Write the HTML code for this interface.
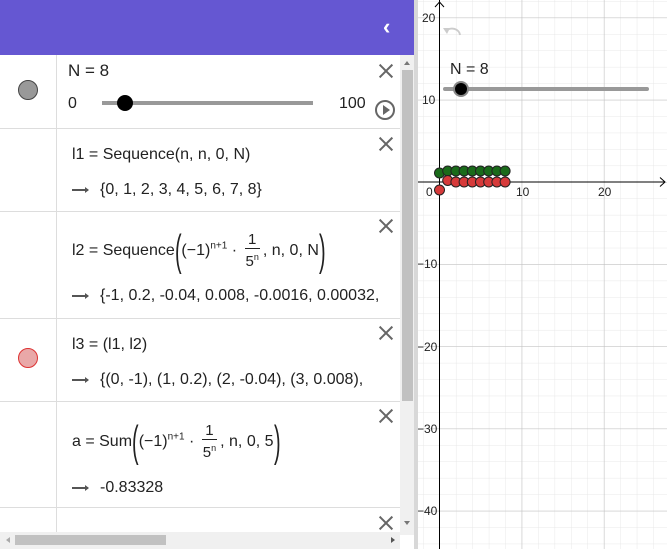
<!DOCTYPE html>
<html><head><style>
body{margin:0;width:667px;height:549px;overflow:hidden;position:relative;background:#fff;font-family:"Liberation Sans",sans-serif;color:#222}
.abs{position:absolute;white-space:nowrap}
.hdr{left:0;top:0;width:414px;height:55px;background:#6557d2}
.t{font-size:16px}
.sep{position:absolute;left:0;width:400px;height:1px;background:#ddd}
.x{position:absolute;width:14px;height:14px}
.x:before,.x:after{content:"";position:absolute;left:-2px;top:6px;width:18px;height:2px;background:#666;transform:rotate(45deg)}
.x:after{transform:rotate(-45deg)}
.arr{display:inline-block;width:16px;height:2px;background:#555;vertical-align:middle;margin-right:12px;position:relative}
.arr:after{content:"";position:absolute;right:-1px;top:-2px;border-left:4px solid #555;border-top:3px solid transparent;border-bottom:3px solid transparent}
.big{font-size:44px;font-weight:100;vertical-align:-10px;transform:scaleX(.45);display:inline-block;margin:0 -4px}
.fr{display:inline-block;vertical-align:middle;text-align:center;font-size:15px;line-height:16px;margin:0 3px}
.fr span{display:block;padding:0 1px}
sup{font-size:10px}
</style></head><body>
<div class="abs hdr"></div>
<div class="abs" style="left:383px;top:14px;color:#fff;font-size:22px;font-weight:bold">‹</div>
<div class="abs" style="left:56px;top:55px;width:1px;height:480px;background:#ddd"></div>
<div class="sep" style="top:128px"></div>
<div class="sep" style="top:211px"></div>
<div class="sep" style="top:318px"></div>
<div class="sep" style="top:401px"></div>
<div class="sep" style="top:507px"></div>
<div class="abs" style="left:18px;top:80px;width:18px;height:18px;border-radius:50%;background:#999;border:1px solid #444"></div>
<div class="abs" style="left:18px;top:348px;width:18px;height:18px;border-radius:50%;background:#e9a8a8;border:1px solid #d33"></div>
<div class="abs t" style="left:68px;top:61px;font-size:17px">N = 8</div>
<div class="abs t" style="left:68px;top:95px">0</div>
<div class="abs" style="left:102px;top:101px;width:211px;height:4px;background:#999"></div>
<div class="abs" style="left:117px;top:95px;width:16px;height:16px;border-radius:50%;background:#000"></div>
<div class="abs t" style="left:339px;top:95px">100</div>
<div class="abs" style="left:375px;top:100px;width:16px;height:16px;border-radius:50%;border:2px solid #666"></div>
<div class="abs" style="left:383px;top:105px;border-left:7px solid #666;border-top:5px solid transparent;border-bottom:5px solid transparent"></div>
<div class="x" style="left:379px;top:64px"></div>
<div class="x" style="left:379px;top:137px"></div>
<div class="x" style="left:379px;top:219px"></div>
<div class="x" style="left:379px;top:326px"></div>
<div class="x" style="left:379px;top:409px"></div>
<div class="x" style="left:379px;top:516px"></div>
<div class="abs t" style="left:72px;top:146px">l1 = Sequence(n, n, 0, N)</div>
<div class="abs t" style="left:72px;top:181px"><span class="arr"></span>{0, 1, 2, 3, 4, 5, 6, 7, 8}</div>
<div class="abs t" style="left:72px;top:226px">l2 = Sequence<span class="big">(</span>(−1)<sup>n+1</sup> · <span class="fr"><span style="border-bottom:1px solid #222">1</span><span>5<sup style="font-size:9px">n</sup></span></span>, n, 0, N<span class="big">)</span></div>
<div class="abs t" style="left:72px;top:287px"><span class="arr"></span>{-1, 0.2, -0.04, 0.008, -0.0016, 0.00032,</div>
<div class="abs t" style="left:72px;top:336px">l3 = (l1, l2)</div>
<div class="abs t" style="left:72px;top:371px"><span class="arr"></span>{(0, -1), (1, 0.2), (2, -0.04), (3, 0.008),</div>
<div class="abs t" style="left:72px;top:417px">a = Sum<span class="big">(</span>(−1)<sup>n+1</sup> · <span class="fr"><span style="border-bottom:1px solid #222">1</span><span>5<sup style="font-size:9px">n</sup></span></span>, n, 0, 5<span class="big">)</span></div>
<div class="abs t" style="left:72px;top:479px"><span class="arr"></span>-0.83328</div>
<div class="abs" style="left:400px;top:55px;width:14px;height:480px;background:#f0f0f0"></div>
<div class="abs" style="left:402px;top:70px;width:11px;height:331px;background:#c1c1c1"></div>
<div class="abs" style="left:404px;top:61px;border-bottom:4px solid #777;border-left:3px solid transparent;border-right:3px solid transparent"></div>
<div class="abs" style="left:404px;top:521px;border-top:4px solid #777;border-left:3px solid transparent;border-right:3px solid transparent"></div>
<div class="abs" style="left:0;top:532px;width:400px;height:17px;background:#f0f0f0"></div>
<div class="abs" style="left:15px;top:535px;width:151px;height:10px;background:#c1c1c1"></div>
<div class="abs" style="left:6px;top:537px;border-right:4px solid #aaa;border-top:3px solid transparent;border-bottom:3px solid transparent"></div>
<div class="abs" style="left:391px;top:537px;border-left:4px solid #555;border-top:3px solid transparent;border-bottom:3px solid transparent"></div>
<div class="abs" style="left:414px;top:0;width:4px;height:549px;background:#d8d8d8"></div>
<svg class="abs" style="left:418px;top:0" width="249" height="549" viewBox="418 0 249 549">
<defs>
<pattern id="mn" patternUnits="userSpaceOnUse" x="439.5" y="182" width="16.44" height="16.44"><path d="M0 0H16.44M0 0V16.44" stroke="#e8e8e8" stroke-width="1" fill="none"/></pattern>
<pattern id="mj" patternUnits="userSpaceOnUse" x="439.5" y="182" width="82.2" height="82.2"><path d="M0 0H82.2M0 0V82.2" stroke="#bdbdbd" stroke-width="1" fill="none"/></pattern>
</defs>
<rect x="418" y="0" width="249" height="549" fill="url(#mn)"/>
<rect x="418" y="0" width="249" height="549" fill="url(#mj)"/>
<line x1="439.5" y1="0" x2="439.5" y2="549" stroke="#000"/>
<line x1="418" y1="182" x2="665" y2="182" stroke="#000"/>
<path d="M435 7L439.5 2L444 7M660 177.5L665 182L660 186.5" stroke="#000" fill="none"/>
<g font-size="12" fill="#222" font-family="Liberation Sans">
<text x="422" y="22">20</text><text x="422" y="104">10</text><text x="426" y="196">0</text>
<text x="516" y="196">10</text><text x="598" y="196">20</text>
<text x="417" y="268">−10</text><text x="417" y="351">−20</text><text x="417" y="433">−30</text><text x="417" y="515">−40</text>
</g>
<path d="M446 31a8 7 0 0 1 14 4" stroke="#ccc" stroke-width="2" fill="none"/><path d="M443 28l4 6l3-6z" fill="#ccc"/>
<text x="450" y="74" font-size="16" font-family="Liberation Sans" fill="#222">N = 8</text>
<line x1="445" y1="89" x2="647" y2="89" stroke="#999" stroke-width="4" stroke-linecap="round"/>
<circle cx="461" cy="89" r="7" fill="#000" stroke="#888" stroke-width="2"/>
<g stroke="#222" stroke-width="1">
<g fill="#1a6b1a"><circle cx="439.5" cy="173" r="5"/><circle cx="447.7" cy="171" r="5"/><circle cx="455.9" cy="171" r="5"/><circle cx="464.1" cy="171" r="5"/><circle cx="472.3" cy="171" r="5"/><circle cx="480.5" cy="171" r="5"/><circle cx="488.7" cy="171" r="5"/><circle cx="496.9" cy="171" r="5"/><circle cx="505.1" cy="171" r="5"/></g>
<g fill="#d63a3a"><circle cx="439.5" cy="190" r="5"/><circle cx="447.7" cy="180.5" r="5"/><circle cx="455.9" cy="182" r="5"/><circle cx="464.1" cy="182" r="5"/><circle cx="472.3" cy="182" r="5"/><circle cx="480.5" cy="182" r="5"/><circle cx="488.7" cy="182" r="5"/><circle cx="496.9" cy="182" r="5"/><circle cx="505.1" cy="182" r="5"/></g>
</g>
</svg>
</body></html>
